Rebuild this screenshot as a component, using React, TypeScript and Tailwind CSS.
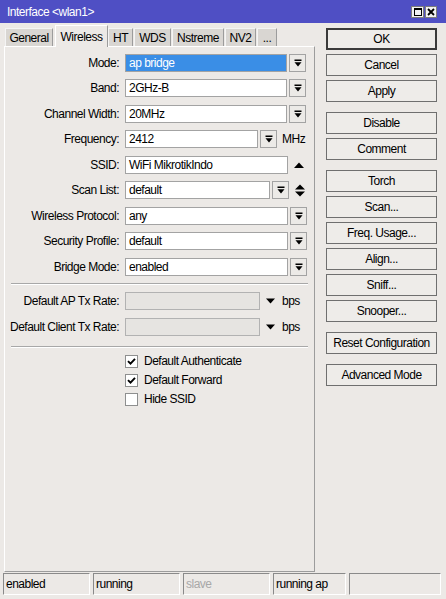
import React from "react";

function DropIcon() {
  return (
    <svg width="8" height="8" viewBox="0 0 8 8">
      <rect x="0.5" y="0.5" width="7" height="1.5" fill="#000" />
      <path d="M0.5 3.3H7.5L4 7.5Z" fill="#000" />
    </svg>
  );
}

function DropBtn() {
  return (
    <div className="ml-[2px] flex h-[18px] w-[17px] shrink-0 items-center justify-center border border-[#a3a3a3] bg-[#eceae7]">
      <DropIcon />
    </div>
  );
}

function Field({
  w,
  value,
  selected,
}: {
  w: string;
  value: string;
  selected?: boolean;
}) {
  return (
    <div
      className={`flex h-[18px] shrink-0 items-center border border-[#a3a3a3] px-[3px] ${w} ${
        selected ? "bg-[#3a8ee6] text-white" : "bg-white text-black"
      }`}
    >
      {value}
    </div>
  );
}

function Row({ label, children }: { label: string; children: React.ReactNode }) {
  return (
    <div className="flex h-[25.5px] items-center">
      <div className="w-[114px] shrink-0 text-right">{label}</div>
      <div className="ml-[6px] flex items-center">{children}</div>
    </div>
  );
}

function Check({ label, checked }: { label: string; checked?: boolean }) {
  return (
    <div className="flex h-[19px] items-center pl-[120px]">
      <div className="flex h-[13px] w-[13px] items-center justify-center border border-[#8e8f8f] bg-white">
        {checked && (
          <svg width="9" height="9" viewBox="0 0 9 9">
            <path d="M1 4.2L3.5 6.7L8 1.8" fill="none" stroke="#000" strokeWidth="1.9" />
          </svg>
        )}
      </div>
      <span className="ml-[6px]">{label}</span>
    </div>
  );
}

function Btn({ label, def, cls }: { label: string; def?: boolean; cls?: string }) {
  return (
    <div
      className={`flex h-[22px] w-[111px] items-center justify-center bg-[#eeece9] ${
        def ? "border-2 border-[#3a3a3a]" : "border border-[#6f6f6f]"
      } ${cls ?? ""}`}
    >
      {label}
    </div>
  );
}

function Tab({ label, w, active }: { label: string; w: string; active?: boolean }) {
  return active ? (
    <div
      className={`relative z-10 -mb-[1px] flex h-[22px] items-center justify-center border-l border-t border-r border-l-white border-t-white border-r-[#9c9c9c] bg-[#ece9e6] ${w}`}
    >
      {label}
    </div>
  ) : (
    <div
      className={`flex h-[18px] items-center justify-center border-l border-t border-r border-l-[#f4f4f4] border-t-[#f4f4f4] border-r-[#9c9c9c] bg-[#d9d6d2] ${w}`}
    >
      {label}
    </div>
  );
}

function Seg({ text, w, gray }: { text: string; w: string; gray?: boolean }) {
  return (
    <div
      className={`flex h-[22px] items-center border border-t-[#8a8a8a] border-l-[#8a8a8a] border-b-white border-r-white px-[2px] ${w} ${
        gray ? "text-[#a8a8a8]" : "text-black"
      }`}
    >
      {text}
    </div>
  );
}

export default function App() {
  return (
    <div className="flex h-[599px] w-[446px] flex-col overflow-hidden bg-[#ece9e6] font-['Liberation_Sans',Arial,sans-serif] text-[12px] leading-none tracking-[-0.5px] text-black">
      {/* title bar */}
      <div className="flex h-[23px] shrink-0 items-center justify-between bg-[#4f4fc4] pl-[7px] pr-[9px]">
        <span className="text-[12px] text-white">Interface &lt;wlan1&gt;</span>
        <div className="flex">
          <div className="flex h-[12px] w-[13px] items-center justify-center border border-[#7c7c7c] bg-[#f2f2f2]">
            <div className="h-[8px] w-[8px] border border-black border-t-2" />
          </div>
          <div className="ml-[1px] flex h-[12px] w-[12px] items-center justify-center border border-[#7c7c7c] bg-[#f2f2f2]">
            <svg width="8" height="8" viewBox="0 0 8 8">
              <path d="M1 1L7 7M7 1L1 7" stroke="#000" strokeWidth="1.8" />
            </svg>
          </div>
        </div>
      </div>

      {/* main */}
      <div className="flex h-[549px] shrink-0 pl-[4px]">
        {/* left */}
        <div className="flex w-[311px] flex-col">
          <div className="flex h-[23px] items-end pl-[1px]">
            <Tab label="General" w="w-[48px]" />
            <div className="w-[2px]" />
            <Tab label="Wireless" w="w-[53px]" active />
            <Tab label="HT" w="w-[25px]" />
            <div className="w-[1px]" />
            <Tab label="WDS" w="w-[37px]" />
            <div className="w-[1px]" />
            <Tab label="Nstreme" w="w-[52px]" />
            <div className="w-[1px]" />
            <Tab label="NV2" w="w-[31px]" />
            <div className="w-[1px]" />
            <Tab label="..." w="w-[20px]" />
          </div>
          <div className="flex flex-1 flex-col border border-b-[#9c9c9c] border-l-white border-r-[#9c9c9c] border-t-white pt-[3px]">
            <Row label="Mode:">
              <Field w="w-[162px]" value="ap bridge" selected />
              <DropBtn />
            </Row>
            <Row label="Band:">
              <Field w="w-[162px]" value="2GHz-B" />
              <DropBtn />
            </Row>
            <Row label="Channel Width:">
              <Field w="w-[162px]" value="20MHz" />
              <DropBtn />
            </Row>
            <Row label="Frequency:">
              <Field w="w-[133px]" value="2412" />
              <DropBtn />
              <span className="ml-[5px]">MHz</span>
            </Row>
            <Row label="SSID:">
              <Field w="w-[163px]" value="WiFi MikrotikIndo" />
              <svg className="ml-[6px]" width="10" height="6" viewBox="0 0 10 6">
                <path d="M0 6L5 0.5L10 6Z" fill="#000" />
              </svg>
            </Row>
            <Row label="Scan List:">
              <Field w="w-[145px]" value="default" />
              <DropBtn />
              <svg className="ml-[6px]" width="10" height="13" viewBox="0 0 10 13">
                <path d="M0 5.5L5 0.5L10 5.5Z" fill="#000" />
                <path d="M0 7.5L10 7.5L5 12.5Z" fill="#000" />
              </svg>
            </Row>
            <Row label="Wireless Protocol:">
              <Field w="w-[163px]" value="any" />
              <DropBtn />
            </Row>
            <Row label="Security Profile:">
              <Field w="w-[163px]" value="default" />
              <DropBtn />
            </Row>
            <Row label="Bridge Mode:">
              <Field w="w-[163px]" value="enabled" />
              <DropBtn />
            </Row>

            <div className="mx-[6px] mt-[3px] h-[2px] border-t border-b border-t-[#a8a8a8] border-b-white" />

            <div className="mt-[4px]">
              <Row label="Default AP Tx Rate:">
                <div className="h-[18px] w-[135px] border border-[#b2b2b2] bg-[#e6e4e1]" />
                <svg className="ml-[6px]" width="9" height="6" viewBox="0 0 9 6">
                  <path d="M0 0.5L9 0.5L4.5 5.5Z" fill="#000" />
                </svg>
                <span className="ml-[7px]">bps</span>
              </Row>
              <Row label="Default Client Tx Rate:">
                <div className="h-[18px] w-[135px] border border-[#b2b2b2] bg-[#e6e4e1]" />
                <svg className="ml-[6px]" width="9" height="6" viewBox="0 0 9 6">
                  <path d="M0 0.5L9 0.5L4.5 5.5Z" fill="#000" />
                </svg>
                <span className="ml-[7px]">bps</span>
              </Row>
            </div>

            <div className="mx-[6px] mt-[6px] h-[2px] border-t border-b border-t-[#a8a8a8] border-b-white" />

            <div className="mt-[4px]">
              <Check label="Default Authenticate" checked />
              <Check label="Default Forward" checked />
              <Check label="Hide SSID" />
            </div>
          </div>
        </div>

        {/* right buttons */}
        <div className="ml-[11px] flex flex-col pt-[5px]">
          <Btn label="OK" def />
          <Btn label="Cancel" cls="mt-[4px]" />
          <Btn label="Apply" cls="mt-[4px]" />
          <Btn label="Disable" cls="mt-[10px]" />
          <Btn label="Comment" cls="mt-[4px]" />
          <Btn label="Torch" cls="mt-[10px]" />
          <Btn label="Scan..." cls="mt-[4px]" />
          <Btn label="Freq. Usage..." cls="mt-[4px]" />
          <Btn label="Align..." cls="mt-[4px]" />
          <Btn label="Sniff..." cls="mt-[4px]" />
          <Btn label="Snooper..." cls="mt-[4px]" />
          <Btn label="Reset Configuration" cls="mt-[10px]" />
          <Btn label="Advanced Mode" cls="mt-[10px]" />
        </div>
      </div>

      {/* status bar */}
      <div className="mt-[1px] flex pl-[3px]">
        <Seg text="enabled" w="w-[87px]" />
        <div className="w-[3px]" />
        <Seg text="running" w="w-[87px]" />
        <div className="w-[3px]" />
        <Seg text="slave" w="w-[87px]" gray />
        <div className="w-[3px]" />
        <Seg text="running ap" w="w-[73px]" />
        <div className="w-[3px]" />
        <Seg text="" w="w-[92px]" />
      </div>
    </div>
  );
}
